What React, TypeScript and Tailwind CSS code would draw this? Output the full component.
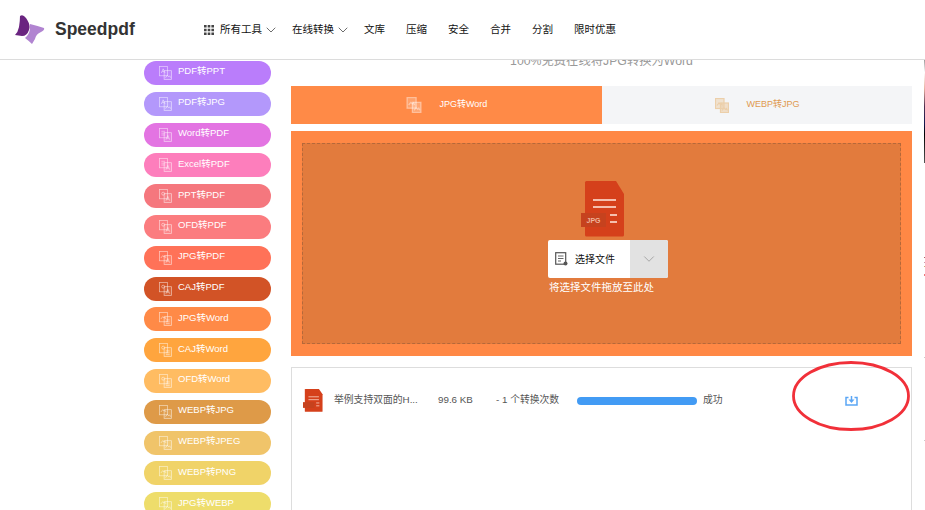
import { ChevronDown } from "lucide-react";

const fontStack = 'font-["Liberation_Sans","Noto_Sans_CJK_SC",sans-serif]';

type Mark = "img" | "doc" | "pdf" | "ofd";

const tools: { label: string; bg: string; from: Mark; to: Mark }[] = [
    { label: "PDF转PPT", bg: "bg-[#ba7dfb]", from: "pdf", to: "img" },
    { label: "PDF转JPG", bg: "bg-[#b398fb]", from: "pdf", to: "img" },
    { label: "Word转PDF", bg: "bg-[#e374e2]", from: "doc", to: "pdf" },
    { label: "Excel转PDF", bg: "bg-[#fd7ebc]", from: "doc", to: "pdf" },
    { label: "PPT转PDF", bg: "bg-[#f5777e]", from: "ofd", to: "pdf" },
    { label: "OFD转PDF", bg: "bg-[#fb7c7f]", from: "ofd", to: "pdf" },
    { label: "JPG转PDF", bg: "bg-[#ff7258]", from: "img", to: "pdf" },
    { label: "CAJ转PDF", bg: "bg-[#d25326]", from: "ofd", to: "pdf" },
    { label: "JPG转Word", bg: "bg-[#ff8a47]", from: "img", to: "doc" },
    { label: "CAJ转Word", bg: "bg-[#ffa53e]", from: "ofd", to: "doc" },
    { label: "OFD转Word", bg: "bg-[#ffbc62]", from: "ofd", to: "doc" },
    { label: "WEBP转JPG", bg: "bg-[#de9a48]", from: "img", to: "img" },
    { label: "WEBP转JPEG", bg: "bg-[#f0c46a]", from: "img", to: "img" },
    { label: "WEBP转PNG", bg: "bg-[#f0d368]", from: "img", to: "img" },
    { label: "JPG转WEBP", bg: "bg-[#eedd6b]", from: "img", to: "img" },
];

const nav = ["文库", "压缩", "安全", "合并", "分割", "限时优惠"];

function PageMark({ kind, x, y }: { kind: Mark; x: number; y: number }) {
    if (kind === "doc") {
        return <path d={`M${x + 1.5} ${y + 2.5}h4M${x + 1.5} ${y + 4.5}h4M${x + 1.5} ${y + 6.5}h4`} />;
    }
    if (kind === "ofd") {
        return <circle cx={x + 3.5} cy={y + 4} r="1.6" />;
    }
    if (kind === "pdf") {
        return <path d={`M${x + 1.5} ${y + 6.5}l2-4.5 2 4.5M${x + 2.5} ${y + 5}h2`} />;
    }
    return <path d={`M${x + 1} ${y + 6.5}l2-2.5 1.5 1.5 1-1 1 2`} />;
}

function SwapIcon({ from, to, solid, className }: { from: Mark; to: Mark; solid?: boolean; className: string }) {
    return (
        <svg viewBox="0 0 14 15" fill="none" stroke="currentColor" strokeWidth={solid ? 1.2 : 0.8} className={className}>
            <rect x="0.5" y="0.5" width="8.5" height="10" fill="currentColor" fillOpacity={solid ? 0.5 : 0} />
            <PageMark kind={from} x={1} y={1} />
            <rect x="5.5" y="5" width="8" height="9.5" fill="currentColor" fillOpacity={solid ? 0.6 : 0.15} />
            <PageMark kind={to} x={6} y={6} />
        </svg>
    );
}

function FileIcon({ label, className }: { label?: boolean; className: string }) {
    return (
        <svg viewBox="0 0 44 56" preserveAspectRatio="none" className={className}>
            <path d="M4 1.500Q4 0 5.500 0H35L43 13V54Q43 55.500 41.500 55.500H5.500Q4 55.500 4 54Z" fill="#d5401b" />
            <path d="M12 19H35M12 26H35M29 34H36M29 41H36" stroke="#ffe9df" strokeWidth="1.600" />
            <rect x="0" y="32" width="25" height="14" fill="#c6421e" />
            {label && (
                <text x="12.500" y="42" textAnchor="middle" fontSize="7" fontWeight="700" fill="#eeb39c" fontFamily="Liberation Sans">
                    JPG
                </text>
            )}
        </svg>
    );
}

export default function App() {
    return (
        <div className={`w-[925px] h-[510px] overflow-hidden bg-white ${fontStack}`}>
            <header className="h-[60px] flex items-center border-b border-[#dcdcdc] pl-[14px]">
                <svg viewBox="0 0 31 30" className="w-[31px] h-[30px] shrink-0">
                    <path d="M16 9Q24 11 30 13Q31 15 27 17Q22 19 21 24L18 29Q15 26 11 23Q15 20 16 14Z" fill="#b184d1" />
                    <path d="M6 1Q9 -1 12 3Q17 10 15 15Q13 21 8 21L1 20Q4 17 5 12Q6 6 6 1Z" fill="#6a2480" />
                </svg>
                <span className="w-[149px] ml-[10px] text-[17.5px] font-bold text-[#333]">Speedpdf</span>
                <nav className="flex items-center gap-[21px] text-[10.5px] text-[#111]">
                    <div className="flex items-center gap-[6px] -mr-[8px]">
                        <svg viewBox="0 0 10 10" fill="#444" className="w-[10px] h-[10px]">
                            <path d="M0 0h2.600v2.600H0zM3.700 0h2.600v2.600H3.700zM7.400 0H10v2.600H7.400zM0 3.700h2.600v2.600H0zM3.700 3.700h2.600v2.600H3.700zM7.400 3.700H10v2.600H7.400zM0 7.400h2.600V10H0zM3.700 7.400h2.600V10H3.700zM7.400 7.400H10V10H7.400z" />
                        </svg>
                        <span>所有工具</span>
                        <ChevronDown size={16} strokeWidth={1} className="-ml-[5px] text-[#222]" />
                    </div>
                    <div className="flex items-center -mr-[8px]">
                        <span>在线转换</span>
                        <ChevronDown size={16} strokeWidth={1} className="ml-[1px] text-[#222]" />
                    </div>
                    {nav.map((item) => (
                        <span key={item}>{item}</span>
                    ))}
                </nav>
            </header>

            <main className="flex h-[450px] pl-[144px] overflow-hidden">
                <aside className="w-[127px] shrink-0 flex flex-col gap-[6.8px] pt-[1px]">
                    {tools.map((tool) => (
                        <div
                            key={tool.label}
                            className={`h-[24px] shrink-0 rounded-full flex items-center gap-[6px] pl-[15px] text-[9.500px] text-white ${tool.bg}`}
                        >
                            <SwapIcon from={tool.from} to={tool.to} className="w-[13px] h-[14px] text-white/60" />
                            <span className="-mt-[3px]">{tool.label}</span>
                        </div>
                    ))}
                </aside>

                <section className="w-[621px] ml-[20px] shrink-0">
                    <p className="-mt-[8px] h-[34px] text-center text-[12.300px] text-[#999]">100%免费在线将JPG转换为Word</p>

                    <div className="flex h-[38px]">
                        <div className="w-[311px] bg-[#ff8a47] flex items-center justify-center gap-[18px] text-[9px] text-white">
                            <SwapIcon solid from="img" to="img" className="w-[16px] h-[16px] text-white/40" />
                            <span className="w-[48px]">JPG转Word</span>
                        </div>
                        <div className="flex-1 bg-[#f4f5f7] flex items-center justify-center gap-[18px] text-[9px] text-[#e09a50]">
                            <SwapIcon solid from="img" to="img" className="w-[14px] h-[15px] text-[#eccfaa]" />
                            <span className="w-[53px]">WEBP转JPG</span>
                        </div>
                    </div>

                    <div className="mt-[7px] h-[225px] bg-[#ff8845] px-[11px] py-[12px]">
                        <div className="h-full border border-dashed border-[#b5683a] bg-[#e27b3d] flex flex-col items-center pt-[37px]">
                            <FileIcon label className="w-[44px] h-[56px] ml-[3px]" />
                            <div className="mt-[3px] ml-[13px] w-[120px] h-[38px] flex rounded-[2px] overflow-hidden bg-white">
                                <div className="w-[82px] flex items-center pl-[7px] gap-[7px] text-[10px] text-[#111]">
                                    <svg viewBox="0 0 13 14" fill="none" stroke="#555" className="w-[13px] h-[14px]">
                                        <rect x="0.700" y="0.700" width="10" height="11.500" strokeWidth="1.200" />
                                        <path d="M3 4h5.500M3 6.500h5.500M3 9h3" strokeWidth="0.900" />
                                        <circle cx="10.500" cy="11.500" r="2" fill="#555" stroke="none" />
                                    </svg>
                                    <span>选择文件</span>
                                </div>
                                <div className="flex-1 bg-[#e2e2e2] flex items-center justify-center text-[#999]">
                                    <ChevronDown size={18} strokeWidth={1.100} />
                                </div>
                            </div>
                            <p className="mt-[2px] text-[10.500px] text-white">将选择文件拖放至此处</p>
                        </div>
                    </div>

                    <div className="relative mt-[11px] h-[160px] border border-[#dddddd] flex items-start pt-[21px] pl-[11px] text-[9.800px] text-[#555]">
                        <FileIcon className="w-[20px] h-[23px]" />
                        <span className="ml-[11px] w-[104px] mt-[4px]">举例支持双面的H...</span>
                        <span className="w-[58px] mt-[4px]">99.6 KB</span>
                        <span className="w-[81px] mt-[4px]">- 1 个转换次数</span>
                        <div className="w-[120px] h-[8px] mt-[8px] rounded-full bg-[#429bf4]" />
                        <span className="ml-[6px] mt-[4px]">成功</span>
                        <svg viewBox="0 0 13 10" fill="none" stroke="#5ba6f5" strokeWidth="1.500" className="ml-[122px] mt-[7px] w-[13px] h-[10px]">
                            <path d="M3.500 1.500H1v7.500h11V1.500H9.500" />
                            <path d="M6.500 0v5" />
                            <path d="M3.500 3.500h6L6.500 7z" fill="#5ba6f5" stroke="none" />
                        </svg>
                        <svg viewBox="0 0 118 70" fill="none" className="absolute left-[500px] -top-[7px] w-[118px] h-[70px]">
                            <ellipse cx="59" cy="35" rx="57.500" ry="33.500" stroke="#f13039" strokeWidth="2.800" />
                        </svg>
                    </div>
                </section>

                <div className="ml-[12px] w-px shrink-0 flex flex-col">
                    <div className="h-[103px] bg-[linear-gradient(to_bottom,#999_0%,#fff_12%,#e8b0a0_28%,#503050_45%,#101850_62%,#000_72%,#555_100%)]" />
                    <div className="mt-[94px] h-px bg-[#a66]" />
                    <div className="mt-[4px] h-px bg-[#c9a]" />
                    <div className="mt-[3px] h-px bg-[#ca7]" />
                    <div className="mt-[7px] h-[2px] bg-[#e77]" />
                    <div className="mt-[81px] h-px bg-[#ccc]" />
                    <div className="mt-[82px] h-px bg-[#ccc]" />
                </div>
            </main>
        </div>
    );
}
